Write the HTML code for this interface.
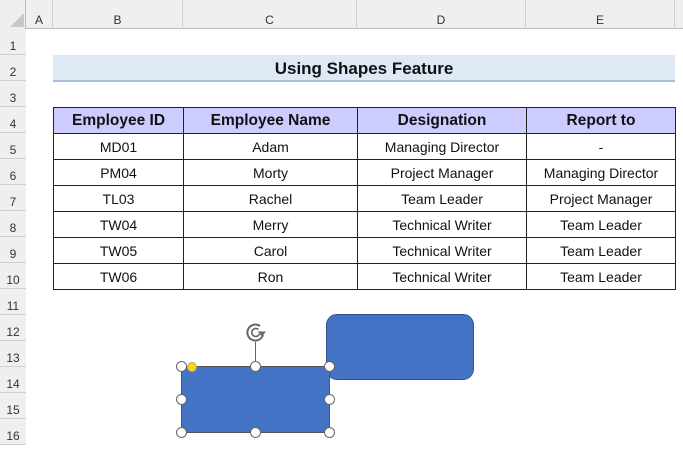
<!DOCTYPE html>
<html><head><style>
body{margin:0;width:683px;height:441px;overflow:hidden;background:#fff;font-family:"Liberation Sans",sans-serif;position:relative}
.a{position:absolute}
.hdr{background:#efefef}
.cl{position:absolute;top:0;height:29px;line-height:40px;text-align:center;font-size:12px;color:#333;border-right:1px solid #d0d0d0;box-sizing:border-box}
.rn{position:absolute;left:0;width:26px;height:26px;line-height:34px;text-align:center;font-size:12px;color:#333;border-bottom:1px solid #d0d0d0;box-sizing:border-box;background:#efefef}
table{position:absolute;left:53px;top:107px;border-collapse:collapse;font-size:14px;color:#111}
td{border:1px solid #222;height:25px;padding:0;text-align:center;white-space:nowrap}
th{border:1px solid #222;height:25px;padding:0;background:#ccccff;font-size:15.5px;color:#111}
.h{position:absolute;width:11px;height:11px;border-radius:50%;background:#fff;border:1.5px solid #666;box-sizing:border-box}
</style></head><body>
<div class="a hdr" style="left:0;top:0;width:683px;height:29px;border-bottom:1px solid #bbb;box-sizing:border-box"></div>
<div class="a hdr" style="left:0;top:0;width:26px;height:441px;border-right:1px solid #bbb;box-sizing:border-box"></div>
<svg class="a" style="left:10px;top:13px" width="14" height="14"><polygon points="14,0 14,14 0,14" fill="#c8c8c8"/></svg>
<div class="cl" style="left:26px;width:27px">A</div>
<div class="cl" style="left:53px;width:130px">B</div>
<div class="cl" style="left:183px;width:174px">C</div>
<div class="cl" style="left:357px;width:169px">D</div>
<div class="cl" style="left:526px;width:149px">E</div>
<div class="rn" style="top:29px">1</div><div class="rn" style="top:55px">2</div><div class="rn" style="top:81px">3</div><div class="rn" style="top:107px">4</div><div class="rn" style="top:133px">5</div><div class="rn" style="top:159px">6</div><div class="rn" style="top:185px">7</div><div class="rn" style="top:211px">8</div><div class="rn" style="top:237px">9</div><div class="rn" style="top:263px">10</div><div class="rn" style="top:289px">11</div><div class="rn" style="top:315px">12</div><div class="rn" style="top:341px">13</div><div class="rn" style="top:367px">14</div><div class="rn" style="top:393px">15</div><div class="rn" style="top:419px">16</div>
<div class="a" style="left:53px;top:55px;width:622px;height:25px;background:#dde9f5;border-bottom:2px solid #a9bddf;text-align:center;font-weight:bold;font-size:17px;line-height:28px;color:#111">Using Shapes Feature</div>
<table>
<tr><th style="width:129px">Employee ID</th><th style="width:173px">Employee Name</th><th style="width:168px">Designation</th><th style="width:148px">Report to</th></tr>
<tr><td>MD01</td><td>Adam</td><td>Managing Director</td><td>-</td></tr>
<tr><td>PM04</td><td>Morty</td><td>Project Manager</td><td>Managing Director</td></tr>
<tr><td>TL03</td><td>Rachel</td><td>Team Leader</td><td>Project Manager</td></tr>
<tr><td>TW04</td><td>Merry</td><td>Technical Writer</td><td>Team Leader</td></tr>
<tr><td>TW05</td><td>Carol</td><td>Technical Writer</td><td>Team Leader</td></tr>
<tr><td>TW06</td><td>Ron</td><td>Technical Writer</td><td>Team Leader</td></tr>
</table>
<div class="a" style="left:326px;top:314px;width:148px;height:66px;background:#4472c4;border:1px solid #2f528f;border-radius:11px;box-sizing:border-box"></div>
<div class="a" style="left:181px;top:366px;width:149px;height:67px;background:#4472c4;border:1.5px solid #555;border-radius:7px;box-sizing:border-box"></div>
<div class="a" style="left:255px;top:342px;width:1px;height:25px;background:#666"></div>
<svg class="a" style="left:244px;top:321px" width="24" height="24" viewBox="0 0 24 24"><path d="M16 5A8 8 0 1 0 19 14" fill="none" stroke="#666" stroke-width="2"/><path d="M14.5 8.5A4 4 0 1 0 15.5 13" fill="none" stroke="#666" stroke-width="1.6"/><polygon points="13.5,10.5 22,10.5 18,15.5" fill="#666"/></svg>
<div class="h" style="left:176px;top:361px"></div><div class="h" style="left:250px;top:361px"></div><div class="h" style="left:324px;top:361px"></div>
<div class="h" style="left:176px;top:394px"></div><div class="h" style="left:324px;top:394px"></div>
<div class="h" style="left:176px;top:427px"></div><div class="h" style="left:250px;top:427px"></div><div class="h" style="left:324px;top:427px"></div>
<div class="a" style="left:187px;top:362px;width:8px;height:8px;border-radius:50%;background:#ffd700;border:1px solid #aa9"></div>
</body></html>
